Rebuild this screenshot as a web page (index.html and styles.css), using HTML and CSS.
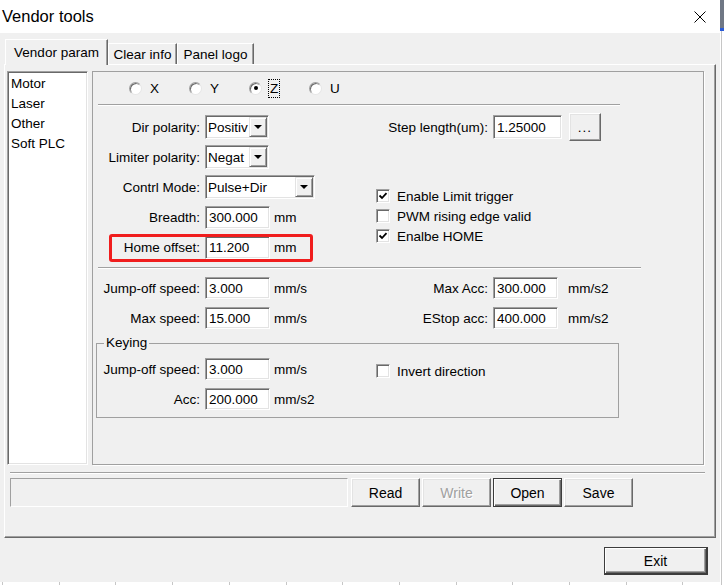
FILE: index.html
```html
<!DOCTYPE html>
<html lang="en">
<head>
<meta charset="utf-8">
<title>Vendor tools</title>
<link rel="stylesheet" href="styles.css">
</head>
<body>
<div class="window">
  <div class="titlebar">
    <span class="title">Vendor tools</span>
    <svg class="close" viewBox="0 0 12 12" width="12" height="12"><path d="M0.5 0.5 L11.5 11.5 M11.5 0.5 L0.5 11.5" stroke="#000" stroke-width="1" fill="none"/></svg>
  </div>
  <div class="client">
    <div class="tabs">
      <div class="tab active">Vendor param</div>
      <div class="tab tab-clear">Clear info</div>
      <div class="tab tab-logo">Panel logo</div>
    </div>
    <div class="tabpanel">
      <div class="main-row">
        <ul class="listbox sunken">
          <li>Motor</li>
          <li>Laser</li>
          <li>Other</li>
          <li>Soft PLC</li>
        </ul>
        <div class="param">
          <div class="axis-row">
            <div class="radio-opt"><span class="radio"></span><span>X</span></div>
            <div class="radio-opt"><span class="radio"></span><span>Y</span></div>
            <div class="radio-opt"><span class="radio checked"></span><span class="focus">Z</span></div>
            <div class="radio-opt"><span class="radio"></span><span>U</span></div>
          </div>
          <div class="sep sep-a"></div>
          <div class="section section-top">
            <div class="col-left">
              <div class="field"><span class="lbl">Dir polarity:</span><div class="combo sunken"><span class="combo-text">Positiv</span><span class="drop"></span></div></div>
              <div class="field"><span class="lbl">Limiter polarity:</span><div class="combo sunken"><span class="combo-text">Negat</span><span class="drop"></span></div></div>
              <div class="field"><span class="lbl">Contrl Mode:</span><div class="combo combo-wide sunken"><span class="combo-text">Pulse+Dir</span><span class="drop"></span></div></div>
              <div class="field"><span class="lbl">Breadth:</span><div class="input sunken">300.000</div><span class="unit">mm</span></div>
              <div class="field"><span class="lbl">Home offset:</span><div class="input sunken">11.200</div><span class="unit">mm</span><span class="mark"></span></div>
            </div>
            <div class="col-right">
              <div class="field field-step"><span class="lbl lbl-r">Step length(um):</span><div class="input input-step sunken">1.25000</div><button class="btn btn-dots">...</button></div>
              <div class="checks">
                <div class="check"><span class="box sunken"><svg viewBox="0 0 10 10" width="10" height="10"><path d="M1.5 4.5 L4 7 L8.5 2.2" fill="none" stroke="#000" stroke-width="1.8"/></svg></span><span>Enable Limit trigger</span></div>
                <div class="check"><span class="box sunken"></span><span>PWM rising edge valid</span></div>
                <div class="check"><span class="box sunken"><svg viewBox="0 0 10 10" width="10" height="10"><path d="M1.5 4.5 L4 7 L8.5 2.2" fill="none" stroke="#000" stroke-width="1.8"/></svg></span><span>Enalbe HOME</span></div>
              </div>
            </div>
          </div>
          <div class="sep sep-b"></div>
          <div class="section section-speeds">
            <div class="col-left col-tight">
              <div class="field field-s"><span class="lbl">Jump-off speed:</span><div class="input input-s sunken">3.000</div><span class="unit">mm/s</span></div>
              <div class="field field-s"><span class="lbl">Max speed:</span><div class="input input-s sunken">15.000</div><span class="unit">mm/s</span></div>
            </div>
            <div class="col-right col-tight">
              <div class="field field-s"><span class="lbl lbl-r">Max Acc:</span><div class="input input-s sunken">300.000</div><span class="unit unit-r">mm/s2</span></div>
              <div class="field field-s"><span class="lbl lbl-r">EStop acc:</span><div class="input input-s sunken">400.000</div><span class="unit unit-r">mm/s2</span></div>
            </div>
          </div>
          <fieldset class="group">
            <legend>Keying</legend>
            <div class="section">
              <div class="col-left col-tight">
                <div class="field field-s"><span class="lbl">Jump-off speed:</span><div class="input input-s sunken">3.000</div><span class="unit">mm/s</span></div>
                <div class="field field-s"><span class="lbl">Acc:</span><div class="input input-s sunken">200.000</div><span class="unit">mm/s2</span></div>
              </div>
              <div class="col-right">
                <div class="check check-invert"><span class="box sunken"></span><span>Invert direction</span></div>
              </div>
            </div>
          </fieldset>
        </div>
      </div>
      <div class="sep sep-c"></div>
      <div class="action-row">
        <div class="status"></div>
        <button class="btn btn-action">Read</button>
        <button class="btn btn-action" disabled>Write</button>
        <button class="btn btn-action default">Open</button>
        <button class="btn btn-action">Save</button>
      </div>
    </div>
    <div class="footer">
      <button class="btn default btn-exit">Exit</button>
    </div>
  </div>
</div>
</body>
</html>
```

FILE: styles.css
```css
* { box-sizing: border-box; }
html, body { margin: 0; padding: 0; }
body {
  width: 724px;
  height: 585px;
  overflow: hidden;
  font-family: "Liberation Sans", Arial, sans-serif;
  font-size: 13.5px;
  color: #000;
  background:
    linear-gradient(#6f7785, #6f7785) 720px 0 / 4px 28px no-repeat,
    linear-gradient(#2a5bd7, #2a5bd7) 720px 28px / 4px 3px no-repeat,
    linear-gradient(#c6c6c6, #c6c6c6) 721px 31px / 1px 554px no-repeat,
    repeating-linear-gradient(90deg, #c6c6c6 0 1px, transparent 1px 56.7px) 2px 0 / 100% 100% no-repeat,
    #fff;
}

.window {
  width: 720px;
  height: 582px;
  background: #f0f0f0;
  display: flex;
  flex-direction: column;
}

.titlebar {
  flex: none;
  height: 33px;
  background: #fff;
  display: flex;
  align-items: center;
  padding-left: 2px;
}
.title { flex: 1; font-size: 16.5px; }
.close { margin-right: 14px; }

.client {
  flex: 1;
  padding-top: 6px;
  display: flex;
  flex-direction: column;
}

.tabs {
  display: flex;
  align-items: flex-end;
  height: 25px;
  padding-left: 5px;
}
.tab {
  height: 21px;
  display: flex;
  align-items: center;
  justify-content: center;
  background: #f0f0f0;
  border-top: 1px solid #fff;
  border-left: 1px solid #fff;
  border-right: 1px solid #696969;
  box-shadow: inset -1px 0 0 #a0a0a0;
  white-space: nowrap;
}
.tab.active {
  width: 103px;
  height: 26px;
  margin-bottom: -1px;
  position: relative;
  z-index: 1;
}
.tab-clear { width: 69px; }
.tab-logo { width: 77px; }

.tabpanel {
  margin-left: 4px;
  width: 712px;
  height: 474px;
  border: 1px solid;
  border-color: #fff #696969 #696969 #fff;
  box-shadow: inset -1px -1px 0 #a0a0a0;
}

.main-row {
  display: flex;
  gap: 4px;
  margin: 6px 0 0 2px;
  height: 394px;
}

.sunken {
  background: #fff;
  border: 1px solid;
  border-color: #a0a0a0 #fff #fff #a0a0a0;
  box-shadow: inset 1px 1px 0 #696969, inset -1px -1px 0 #e3e3e3;
}

.listbox {
  list-style: none;
  margin: 0;
  padding: 2px 0 0 3px;
  width: 81px;
  height: 394px;
}
.listbox li { line-height: 20px; white-space: nowrap; }

.param {
  width: 612px;
  height: 394px;
  border: 1px solid #a0a0a0;
  box-shadow: 1px 1px 0 #fff;
  padding: 6px 0 0 5px;
}

.axis-row {
  display: flex;
  height: 20px;
  padding-left: 31px;
}
.radio-opt {
  width: 60px;
  display: flex;
  align-items: center;
  gap: 8px;
}
.radio {
  width: 13px;
  height: 13px;
  border-radius: 50%;
  background: #fff;
  border: 1px solid;
  border-color: #a0a0a0 #e6e6e6 #e6e6e6 #a0a0a0;
  box-shadow: inset 1px 1px 0 #696969;
  display: flex;
  align-items: center;
  justify-content: center;
}
.radio.checked::after {
  content: "";
  width: 4px;
  height: 4px;
  border-radius: 50%;
  background: #000;
}
.focus {
  outline: 1px dotted #000;
  outline-offset: 1px;
}

.sep {
  height: 2px;
  border-top: 1px solid #a0a0a0;
  border-bottom: 1px solid #fff;
}
.sep-a { width: 522px; margin-top: 6px; }
.sep-b { width: 543px; margin-top: 8px; }
.sep-c { width: 695px; margin: 7px 0 0 5px; }

.section { display: flex; }
.section-top { margin-top: 9px; }
.section-speeds { margin-top: 8px; }

.col-left {
  flex: none;
  width: 278px;
  display: flex;
  flex-direction: column;
  gap: 6px;
}
.col-right {
  display: flex;
  flex-direction: column;
}
.col-tight { gap: 8px; }

.field {
  position: relative;
  display: flex;
  align-items: center;
  height: 24px;
}
.field-s { height: 22px; }
.field-step { height: 28px; margin-top: -2px; }

.lbl {
  flex: none;
  width: 102px;
  margin-right: 5px;
  text-align: right;
  white-space: nowrap;
}
.lbl-r { width: 112px; }

.input {
  flex: none;
  width: 65px;
  height: 23px;
  padding-left: 3px;
  display: flex;
  align-items: center;
  white-space: nowrap;
}
.input-s { height: 22px; }
.input-step { width: 69px; height: 24px; }

.unit { margin-left: 4px; white-space: nowrap; }
.unit-r { margin-left: 10px; }

.combo {
  flex: none;
  display: flex;
  width: 64px;
  height: 24px;
  padding: 1px;
}
.combo-wide { width: 110px; }
.combo-text {
  flex: 1;
  overflow: hidden;
  white-space: nowrap;
  padding-left: 1px;
  display: flex;
  align-items: center;
}
.drop {
  flex: none;
  width: 18px;
  background: #f0f0f0;
  border: 1px solid;
  border-color: #e3e3e3 #696969 #696969 #e3e3e3;
  box-shadow: inset 1px 1px 0 #fff, inset -1px -1px 0 #a0a0a0;
  display: flex;
  align-items: center;
  justify-content: center;
}
.drop::after {
  content: "";
  border-left: 4px solid transparent;
  border-right: 4px solid transparent;
  border-top: 4px solid #000;
}

.mark {
  position: absolute;
  left: 11px;
  top: -1px;
  width: 204px;
  height: 28px;
  border: 3px solid #f01d1d;
  border-radius: 3px;
  pointer-events: none;
}

.checks {
  margin-top: 45px;
  display: flex;
  flex-direction: column;
}
.check {
  display: flex;
  align-items: center;
  gap: 7px;
  height: 20px;
  white-space: nowrap;
}
.check-invert { margin-top: 3px; }
.box {
  flex: none;
  width: 14px;
  height: 14px;
  display: flex;
  align-items: center;
  justify-content: center;
}

.group {
  margin: 6px 0 0 -2px;
  width: 523px;
  border: 1px solid #a0a0a0;
  padding: 7px 0 7px 1px;
  min-width: 0;
}
.group legend {
  padding: 0 2px;
  margin-left: 6px;
  line-height: 16px;
}

.action-row {
  display: flex;
  gap: 2px;
  margin: 4px 0 0 5px;
  height: 29px;
}
.status {
  width: 338px;
  height: 29px;
  margin-right: 1px;
  border: 1px solid;
  border-color: #a0a0a0 #fff #fff #a0a0a0;
}

.btn {
  font-family: "Liberation Sans", Arial, sans-serif;
  font-size: 14px;
  color: #000;
  background: #f0f0f0;
  padding: 0;
  border: 1px solid;
  border-color: #fff #696969 #696969 #fff;
  box-shadow: inset -1px -1px 0 #a0a0a0, inset 1px 1px 0 #e3e3e3;
}
.btn:disabled {
  color: #a0a0a0;
  text-shadow: 1px 1px 0 #fff;
}
.btn.default {
  border-color: #3c3c3c;
  box-shadow: inset 1px 1px 0 #fff, inset -1px -1px 0 #696969, inset -2px -2px 0 #a0a0a0;
}
.btn-action { width: 69px; height: 29px; }
.btn-dots {
  flex: none;
  width: 32px;
  height: 28px;
  margin-left: 7px;
  font-size: 13.5px;
  letter-spacing: 1px;
}

.footer {
  display: flex;
  justify-content: flex-end;
  padding: 9px 12px 0 0;
}
.btn-exit {
  width: 104px;
  height: 28px;
  border-width: 1px 2px 2px 1px;
}
```
